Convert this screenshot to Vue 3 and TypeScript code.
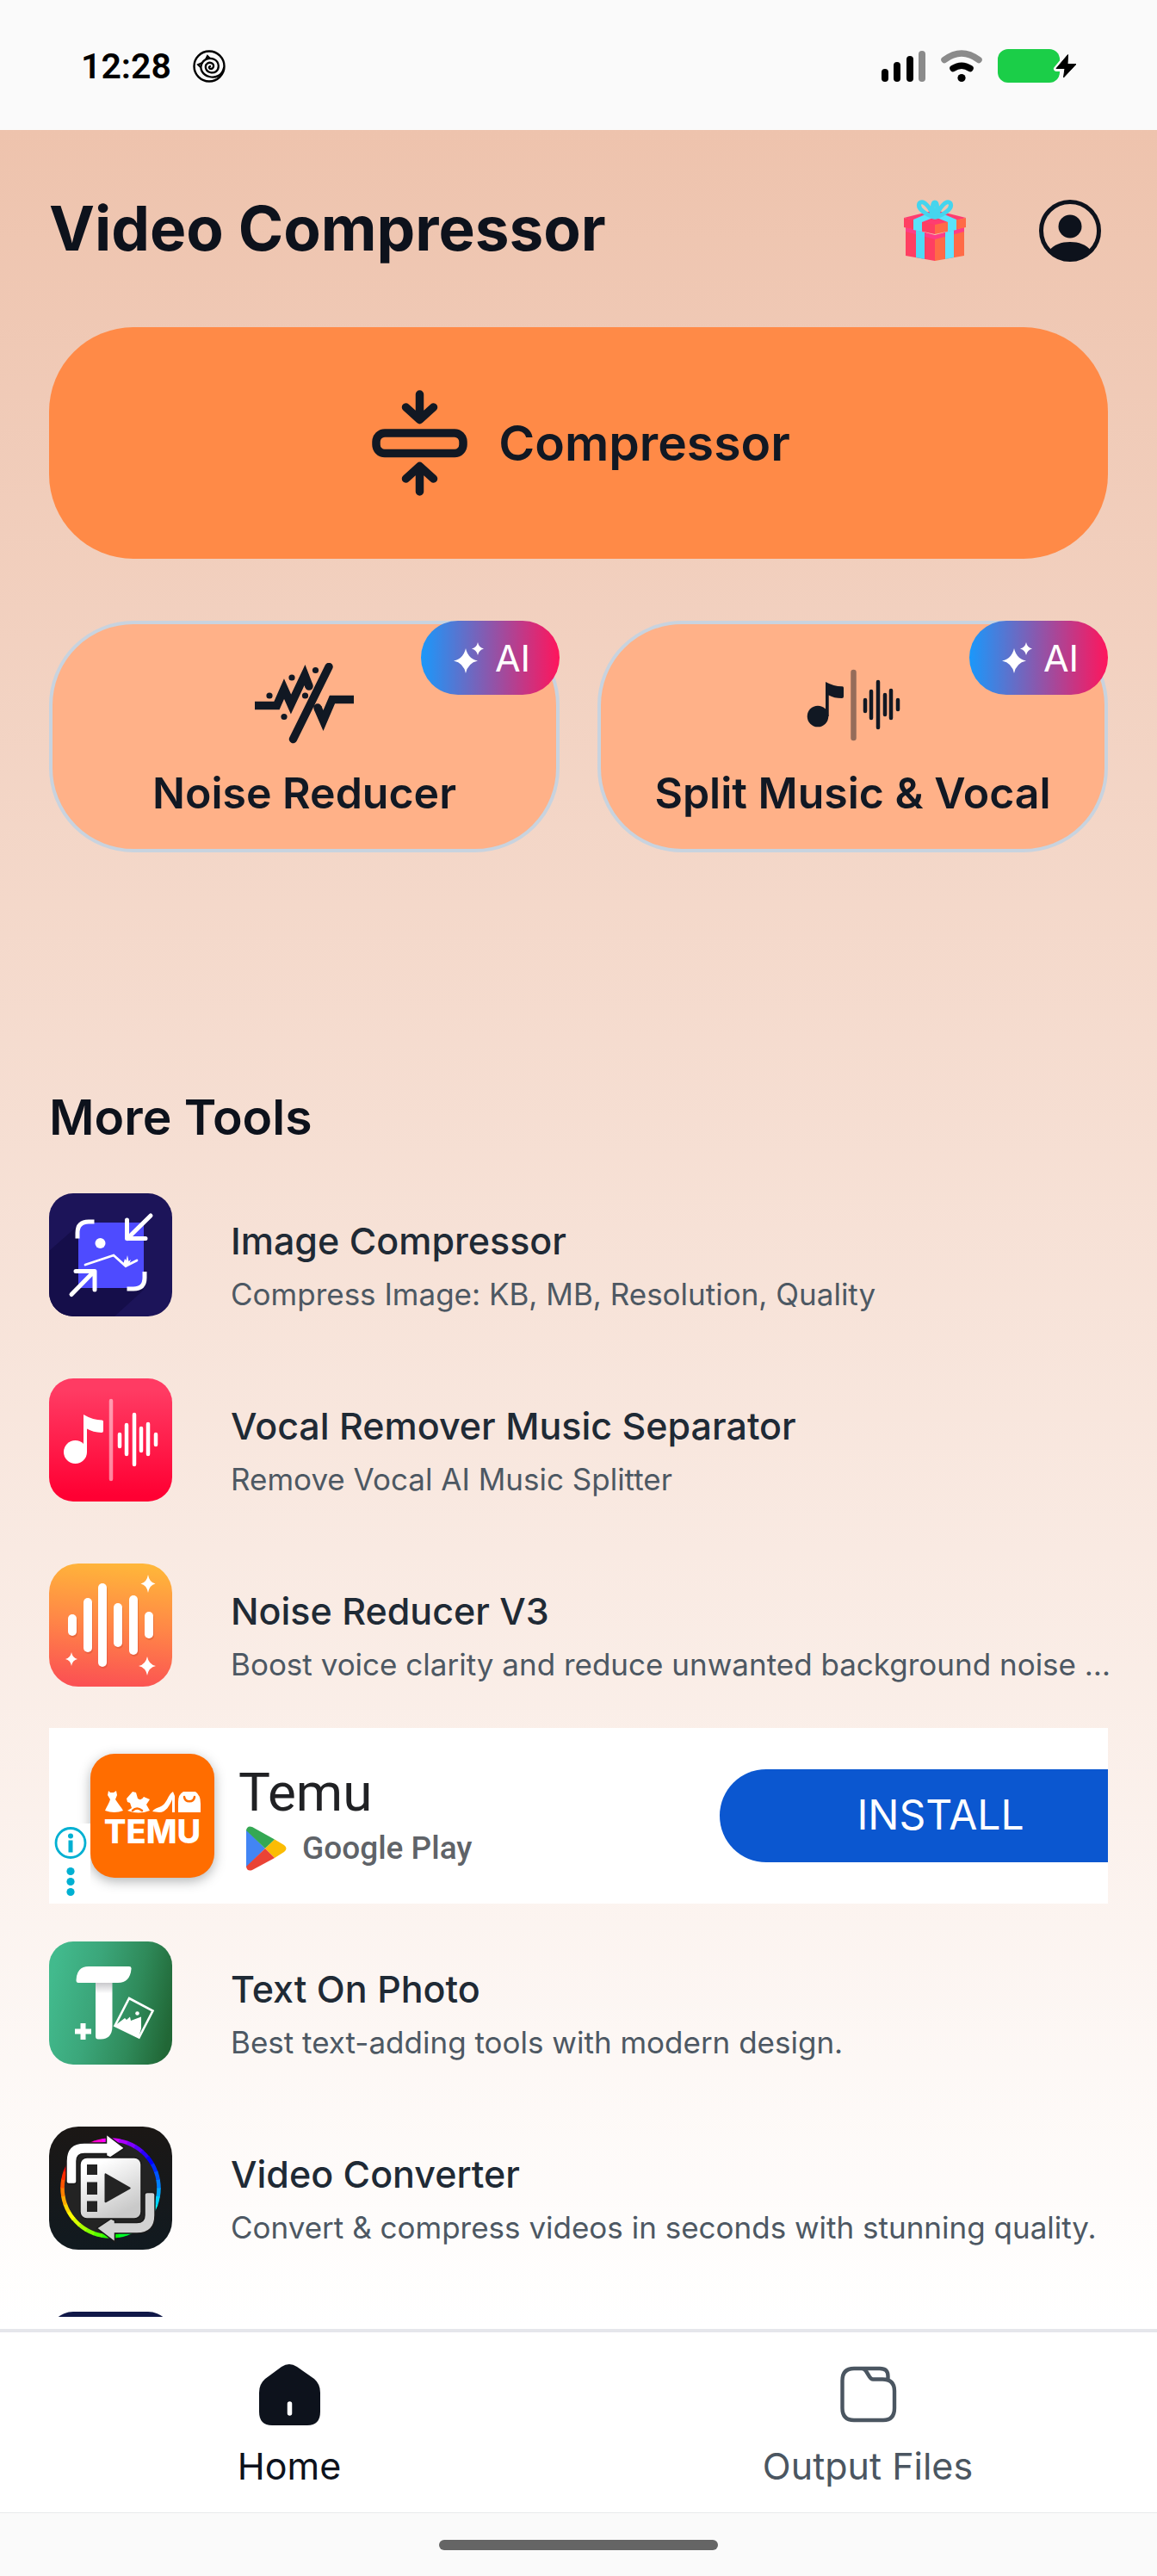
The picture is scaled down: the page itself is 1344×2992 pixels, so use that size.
<script setup lang="ts">
type IconName = 'image' | 'vocal' | 'noise' | 'text' | 'video' | 'next'

interface Tool {
  icon: IconName
  title: string
  text: string
}

const toolsBeforeAd: Tool[] = [
  { icon: 'image', title: 'Image Compressor', text: 'Compress Image: KB, MB, Resolution, Quality' },
  { icon: 'vocal', title: 'Vocal Remover Music Separator', text: 'Remove Vocal AI Music Splitter' },
  { icon: 'noise', title: 'Noise Reducer V3', text: 'Boost voice clarity and reduce unwanted background noise …' },
]

const toolsAfterAd: Tool[] = [
  { icon: 'text', title: 'Text On Photo', text: 'Best text-adding tools with modern design.' },
  { icon: 'video', title: 'Video Converter', text: 'Convert & compress videos in seconds with stunning quality.' },
  { icon: 'next', title: '', text: '' },
]

const sections = [
  { id: 'before', tools: toolsBeforeAd },
  { id: 'after', tools: toolsAfterAd },
]

// x, top, bottom of every sound bar
const darkBars = [[72, 43, 56], [79, 33, 64], [87, 22, 75], [95, 37, 60], [102, 32, 64], [110, 43, 54]]
const vocalBars = [[82, 65, 79], [90, 54, 88], [99, 42, 100], [107, 58, 84], [115, 53, 88], [124, 65, 77]]
const noiseBars = [[27, 64, 79], [45, 45, 98], [62, 28, 115], [80, 51, 92], [98, 42, 101], [116, 61, 82]]

// Colour wheel split into short arcs
const ring = Array.from({ length: 36 }, (_, i) => {
  const point = (deg: number) => {
    const a = ((deg - 90) * Math.PI) / 180
    return `${(71.5 + 56 * Math.cos(a)).toFixed(1)} ${(71.5 + 56 * Math.sin(a)).toFixed(1)}`
  }
  return {
    d: `M${point(i * 10)}A56 56 0 0 1 ${point(i * 10 + 11)}`,
    color: `hsl(${(650 - i * 10) % 360} 100% 50%)`,
  }
})
</script>

<template>
  <div class="screen">
    <div class="status">
      <div class="status-left">
        <span class="time">12:28</span>
        <svg width="38" height="38" viewBox="0 0 38 38" fill="none" stroke="#000" stroke-linecap="round" aria-hidden="true">
          <circle cx="19" cy="19" r="17.5" stroke-width="2.4" />
          <path d="M36 21C34 30 26 33 19 31C11 29 8 22 10 17C12 11 19 8 25 11C31 14 31 22 27 25C23 28 16 26 15 21C14 16 19 13 23 16C25 18 24 22 21 22C19 22 18 20 20 19" stroke-width="2.3" />
          <path d="M11 15L6 17L9 20M15 11L17 7L20 10" stroke-width="2" />
        </svg>
      </div>
      <svg width="226" height="39" viewBox="0 0 226 39" aria-hidden="true">
        <rect x="0" y="23" width="8" height="15" rx="4" />
        <rect x="14" y="15" width="8" height="23" rx="4" />
        <rect x="29" y="8" width="8" height="30" rx="4" />
        <rect x="43" y="2" width="8" height="36" rx="4" fill="#8b8b8b" />
        <path d="M73 12.500Q93 -2.500 113 12.500" fill="none" stroke="#8b8b8b" stroke-width="7.500" stroke-linecap="round" />
        <path d="M83 22.500Q93 16 103 22.500" fill="none" stroke="#000" stroke-width="7.500" stroke-linecap="round" />
        <circle cx="93" cy="33.500" r="4.600" />
        <rect x="135" y="0" width="72" height="39" rx="12" fill="#1bce48" />
        <path d="M217 6L203 23H212L209 34L226 17H216Z" fill="#fafafa" stroke="#fafafa" stroke-width="6" stroke-linejoin="round" />
        <path d="M216.500 6.500L203 22.500H213L211.500 33L226 17.500H216Z" stroke="#000" stroke-linejoin="round" />
      </svg>
    </div>

    <main class="content">
      <header class="header">
        <h1>Video Compressor</h1>
        <div class="header-actions">
          <button type="button" aria-label="Gifts">
            <svg width="72" height="72" viewBox="0 0 72 72" aria-hidden="true">
              <path d="M2 32L36 42V71L2 65Z" fill="#ff3f62" />
              <path d="M70 32L36 42V71L70 65Z" fill="#ff6b47" />
              <path d="M2 32L36 41L70 32V37L36 46L2 37Z" fill="#ff3d86" />
              <path d="M14 35L24 38V69L14 67Z" fill="#4fdaf5" />
              <path d="M58 35L48 38V69L58 67Z" fill="#5fe3ff" />
              <path d="M0 21L36 12L72 21L36 31Z" fill="#ff3d70" />
              <path d="M0 21L36 29V40L0 32Z" fill="#ff3f62" />
              <path d="M72 21L36 29V40L72 32Z" fill="#ff6b47" />
              <path d="M11 23L25 17L36 16L47 17L61 23V35L51 37V26L36 20L21 26V37L11 35Z" fill="#5ae3fb" />
              <g fill="none" stroke="#45d5ee" stroke-width="5" stroke-linejoin="round">
                <path d="M35 20C25 17 15 10 18 4C23-1 31 10 35 20Z" />
                <path d="M37 20C47 17 57 10 54 4C49-1 41 10 37 20Z" />
                <path d="M36 20C32 13 33 3 36 3C39 3 40 13 36 20Z" />
              </g>
            </svg>
          </button>
          <button type="button" aria-label="Profile">
            <svg width="72" height="72" viewBox="0 0 72 72" fill="#0d121c" aria-hidden="true">
              <circle cx="36" cy="36" r="33.500" fill="none" stroke="#0d121c" stroke-width="5" />
              <circle cx="36" cy="31" r="13.500" />
              <path d="M12 59C17 52 26 49 36 49S55 52 60 59C54 66 46 70.500 36 70.500S18 66 12 59Z" />
            </svg>
          </button>
        </div>
      </header>

      <button type="button" class="primary">
        <svg width="111" height="123" viewBox="0 0 111 123" fill="none" stroke="#111823" stroke-width="9.500" stroke-linecap="round" stroke-linejoin="round" aria-hidden="true">
          <path d="M55.500 5V33M39.500 20L55.500 34.500L71.500 20M55.500 118V90M39.500 103L55.500 88.500L71.500 103" />
          <rect x="5" y="50" width="101" height="23.500" rx="10" />
        </svg>
        <span>Compressor</span>
      </button>

      <div class="cards">
        <button type="button" class="card">
          <svg width="115" height="94" viewBox="0 0 115 94" fill="none" stroke="#111823" stroke-width="9.500" stroke-miterlimit="10" aria-hidden="true">
            <path d="M0 49.500H25.500L34 30L42 48L58 14L63 27M73 52L79.500 67L90 42.500H115" />
            <path d="M86 4.500L44.500 88.500M63 27V27.100M73 52V52.100" stroke-linecap="round" />
            <g fill="#111823" stroke="none">
              <circle cx="17" cy="38" r="3.600" /><circle cx="43" cy="17" r="3.600" /><circle cx="70.500" cy="8.500" r="3.600" />
              <circle cx="58.500" cy="38" r="3.600" /><circle cx="34" cy="62.500" r="3.600" />
            </g>
          </svg>
          <span class="card-label">Noise Reducer</span>
          <span class="badge">
            <svg width="35" height="36" viewBox="0 0 35 36" fill="#fff" aria-hidden="true">
              <path d="M14 7Q16.500 19 28 21.500Q16.500 24 14 36Q11.500 24 0 21.500Q11.500 19 14 7ZM28 0Q29.200 6 35 7.500Q29.200 9 28 15Q26.800 9 21 7.500Q26.800 6 28 0Z" />
            </svg>AI
          </span>
        </button>
        <button type="button" class="card">
          <svg width="115" height="94" viewBox="0 0 115 94" aria-hidden="true">
            <g fill="#111823">
              <ellipse cx="17" cy="62" rx="12.300" ry="12.300" />
              <path d="M26 62V22Q36 27.500 45.500 27.300Q47 27.300 47 29V39Q47 41 45 41Q36 41 29.700 37.500V62Z" />
            </g>
            <path d="M58.500 11V87" stroke="#111823" stroke-opacity="0.45" stroke-width="6.500" stroke-linecap="round" />
            <path v-for="b in darkBars" :key="b[0]" :d="`M${b[0]} ${b[1]}V${b[2]}`" stroke="#111823" stroke-width="4.500" stroke-linecap="round" />
          </svg>
          <span class="card-label">Split Music &amp; Vocal</span>
          <span class="badge">
            <svg width="35" height="36" viewBox="0 0 35 36" fill="#fff" aria-hidden="true">
              <path d="M14 7Q16.500 19 28 21.500Q16.500 24 14 36Q11.500 24 0 21.500Q11.500 19 14 7ZM28 0Q29.200 6 35 7.500Q29.200 9 28 15Q26.800 9 21 7.500Q26.800 6 28 0Z" />
            </svg>AI
          </span>
        </button>
      </div>

      <h2>More Tools</h2>

      <template v-for="section in sections" :key="section.id">
        <ul class="tools">
          <li v-for="tool in section.tools" :key="tool.icon">
            <a href="#" class="tool">
              <svg class="tool-icon" :class="tool.icon" width="143" height="143" viewBox="0 0 143 143" aria-hidden="true">
                <template v-if="tool.icon === 'image'">
                  <rect width="143" height="143" fill="#1c1459" />
                  <path d="M0 67L33 38L110 112L76 143H0Z" fill="#150e4a" />
                  <rect x="34" y="34" width="76" height="76" rx="3" fill="#4e4bff" />
                  <g fill="none" stroke="#fff" stroke-width="5">
                    <path d="M52.500 33H46Q33 33 33 46V52.500M90.500 111H98Q111 111 111 98V91" />
                    <path d="M118 26L91 52.500M90.500 31V52.500H112M26 117.500L52 91M31 90.500H53V112" stroke-linecap="round" stroke-linejoin="round" />
                    <path d="M42 83L75 72L89 84.500L102 78" stroke-width="2.800" stroke-linecap="round" />
                  </g>
                  <path d="M86 83L88 76L89.500 78L91 72L92.500 79L95 77L93 83L89 86Z" fill="#fff" />
                  <circle cx="59.500" cy="58" r="6" fill="#fff" />
                </template>
                <template v-else-if="tool.icon === 'vocal'">
                  <defs>
                    <linearGradient id="vocal-bg" x1="0" y1="0" x2="0" y2="1">
                      <stop offset="0.1" stop-color="#ff3b63" /><stop offset="0.95" stop-color="#ff0033" />
                    </linearGradient>
                  </defs>
                  <rect width="143" height="143" fill="url(#vocal-bg)" />
                  <circle cx="30.500" cy="85.500" r="13.500" fill="#fff" />
                  <path d="M40 86V42Q51 48.500 61.500 48.500Q63 48.500 63 50V61Q63 63 61 63Q51 62.500 44 58.500V86Z" fill="#fff" />
                  <path d="M72 26V117" stroke="#fff" stroke-opacity="0.5" stroke-width="4.500" stroke-linecap="round" />
                  <path v-for="b in vocalBars" :key="b[0]" :d="`M${b[0]} ${b[1]}V${b[2]}`" stroke="#fff" stroke-width="4.500" stroke-linecap="round" />
                </template>
                <template v-else-if="tool.icon === 'noise'">
                  <defs>
                    <linearGradient id="noise-bg" x1="0.55" y1="0" x2="0.45" y2="1">
                      <stop offset="0" stop-color="#ffb63a" /><stop offset="0.5" stop-color="#ff8647" /><stop offset="1" stop-color="#fb5153" />
                    </linearGradient>
                  </defs>
                  <rect width="143" height="143" fill="url(#noise-bg)" />
                  <g transform="translate(1 2)" stroke="#b33c20" stroke-opacity="0.25" stroke-width="10" stroke-linecap="round">
                    <path v-for="b in noiseBars" :key="b[0]" :d="`M${b[0]} ${b[1]}V${b[2]}`" />
                  </g>
                  <path v-for="b in noiseBars" :key="b[0]" :d="`M${b[0]} ${b[1]}V${b[2]}`" stroke="#fff" stroke-width="10" stroke-linecap="round" />
                  <path d="M115 13Q116.500 22 123.500 23.500Q116.500 25 115 34Q113.500 25 106.500 23.500Q113.500 22 115 13ZM26 103Q27.200 109.800 33 111Q27.200 112.200 26 119Q24.800 112.200 19 111Q24.800 109.800 26 103ZM114 108Q115.700 117.300 124 119Q115.700 120.700 114 130Q112.300 120.700 104 119Q112.300 117.300 114 108Z" fill="#fff" />
                </template>
                <template v-else-if="tool.icon === 'text'">
                  <defs>
                    <linearGradient id="text-bg" x1="0" y1="0.4" x2="1" y2="0.6">
                      <stop offset="0" stop-color="#42ba8d" /><stop offset="0.35" stop-color="#3ba67a" /><stop offset="0.7" stop-color="#2f8a5a" /><stop offset="1" stop-color="#216736" />
                    </linearGradient>
                    <linearGradient id="text-stem" x1="0" y1="0" x2="0" y2="1">
                      <stop offset="0" stop-color="#c4c4c8" /><stop offset="0.2" stop-color="#fff" />
                    </linearGradient>
                  </defs>
                  <rect width="143" height="143" fill="url(#text-bg)" />
                  <path d="M54 47H73.500V98Q73.500 113.500 60 113.500H57Q54 113.500 54 110Z" fill="url(#text-stem)" />
                  <path d="M31.500 45Q32 29 46 29H93Q96 29 95.500 32Q94 48 80 48H34Q31.500 48 31.500 45Z" fill="#fff" />
                  <path d="M39.500 95V114M30 104.500H49" stroke="#fff" stroke-width="6" />
                  <path d="M93 66L120.500 80.500L104.500 111.500L76.500 98Z" fill="none" stroke="#fff" stroke-width="2.600" />
                  <path d="M76 98L88 89L90 91L94 87.500L95 92L107 87.500L107 101L104 112Z" fill="#fff" />
                  <circle cx="102.500" cy="83.500" r="2.300" fill="#fff" />
                </template>
                <template v-else-if="tool.icon === 'video'">
                  <defs>
                    <linearGradient id="video-bg" x1="0" y1="0" x2="0" y2="1">
                      <stop offset="0" stop-color="#1b1715" /><stop offset="1" stop-color="#111a20" />
                    </linearGradient>
                    <linearGradient id="video-film" x1="0" y1="0" x2="0.5" y2="1">
                      <stop offset="0.2" stop-color="#fff" /><stop offset="1" stop-color="#c9c9c9" />
                    </linearGradient>
                  </defs>
                  <rect width="143" height="143" fill="url(#video-bg)" />
                  <circle cx="71.500" cy="71.500" r="55" fill="#232323" />
                  <path v-for="arc in ring" :key="arc.d" :d="arc.d" fill="none" :stroke="arc.color" stroke-width="4.500" />
                  <g stroke="#1a1a1a" stroke-width="1.500">
                    <path d="M20 64V40Q20 19 41 19H66.500V9L87.500 25L71 36L66.500 34V31.500H41Q32 31.500 32 40V64Q32 66.500 29 66.500H23Q20 66.500 20 64Z" fill="#fff" />
                    <path d="M20 64V40Q20 19 41 19H66.500V9L87.500 25L71 36L66.500 34V31.500H41Q32 31.500 32 40V64Q32 66.500 29 66.500H23Q20 66.500 20 64Z" fill="#d2d2d2" transform="rotate(180 71.500 71.500)" />
                    <rect x="36" y="36" width="71" height="71" rx="8" fill="url(#video-film)" />
                  </g>
                  <path d="M44 44H56V56H44ZM44 64.500H56V79H44ZM44 86.500H56V99H44ZM66 54.500Q64.500 53.500 64.500 56V87Q64.500 89 66.500 88L94 72.500Q95.500 71.500 94 70.500Z" fill="#232323" />
                </template>
                <rect v-else width="143" height="143" fill="#101848" />
              </svg>
              <span class="tool-text">
                <span class="tool-title">{{ tool.title }}</span>
                <span class="tool-desc">{{ tool.text }}</span>
              </span>
            </a>
          </li>
        </ul>

        <aside v-if="section.id === 'before'" class="ad">
          <svg class="ad-info" width="48" height="93" viewBox="0 0 48 93" fill="#00b0d2" aria-hidden="true">
            <circle cx="25" cy="22.500" r="17" fill="none" stroke="#00b0d2" stroke-width="2.800" />
            <circle cx="25" cy="14.500" r="3" />
            <rect x="22.500" y="19.500" width="5" height="14" />
            <circle cx="25" cy="55.500" r="4.600" /><circle cx="25" cy="67.500" r="4.600" /><circle cx="25" cy="79.500" r="4.600" />
          </svg>
          <div class="ad-logo">
            <svg width="112" height="26" viewBox="0 0 112 26" fill="#fff" aria-hidden="true">
              <path d="M5 0L7 2H11L14 0L15 5L13 10C16 15 20 19 22 23Q12 27 1 23C3 18 6 14 7 10L4 5Z" />
              <path d="M26 9L33 1L37 2L39 9Q43 12 46 7L53 10L49 16L53 23Q40 28 27 23L32 20L30 14L27 13Z" />
              <path d="M56 24C59 19 66 20 70 15C74 10 75 4 80 1L82 6V25H79V10C76 17 72 25 64 25Z" />
              <path d="M92 1H106Q112 5 112 15V25H86V13Q86 4 92 1Z" />
              <path d="M93 7C94 14 104 14 105 7M33 23Q38 18 44 23" fill="none" stroke="#ff6d00" stroke-width="2.500" stroke-linecap="round" />
            </svg>
            <span>TEMU</span>
          </div>
          <div class="ad-body">
            <span class="ad-title">Temu</span>
            <span class="ad-store">
              <svg width="48" height="52" viewBox="0 0 48 52" aria-hidden="true">
                <path d="M1 4L23 26L1 48Z" fill="#4285f4" />
                <path d="M1 5Q2-1 8 1L34 15.500L23 26Z" fill="#34a853" />
                <path d="M34 15.500L45 22Q50 26 45 30L34 37L23 26Z" fill="#fbbc04" />
                <path d="M1 47Q2 53 8 51L34 37L23 26Z" fill="#ea4335" />
              </svg>
              Google Play
            </span>
          </div>
          <button type="button" class="install">INSTALL</button>
        </aside>
      </template>
    </main>

    <nav class="tabs">
      <a href="#" class="tab active" aria-current="page">
        <svg width="71" height="71" viewBox="0 0 71 71" aria-hidden="true">
          <path d="M26 3Q35-3 44 3L64 17Q71 23 71 33V55Q71 71 56 71H15Q0 71 0 55V33Q0 23 7 17Z" fill="#0d121c" />
          <path d="M35.500 46V57" stroke="#fff" stroke-width="5.500" stroke-linecap="round" />
        </svg>
        Home
      </a>
      <a href="#" class="tab">
        <svg width="71" height="71" viewBox="0 0 71 71" fill="none" stroke="#4b5661" stroke-width="4.400" stroke-linejoin="round" aria-hidden="true">
          <path d="M58.500 18V14Q58.500 5 49 5H19Q5.500 5 5.500 19V51Q5.500 65 19 65H53Q66 65 66 51V31Q66 17.500 52 17.500H41Q39 17.500 37 14.500L33 8Q31 5 28 5" />
        </svg>
        Output Files
      </a>
    </nav>
    <div class="gesture"><span></span></div>
  </div>
</template>

<style>
body {
  background: #fafafa;
}
</style>

<style scoped>
* {
  box-sizing: border-box;
}

.screen {
  display: flex;
  flex-direction: column;
  height: 100vh;
  font-family: Inter, Roboto, sans-serif;
  color: #0d121c;
  background: linear-gradient(to bottom, #eec3ad 151px, #ffffff 2700px);
}

svg {
  display: block;
  flex: none;
}

button {
  margin: 0;
  border: 0;
  padding: 0;
  font: inherit;
  color: inherit;
  background: none;
  cursor: pointer;
}

a {
  color: inherit;
  text-decoration: none;
}

.status {
  display: flex;
  flex: none;
  align-items: center;
  justify-content: space-between;
  height: 151px;
  padding: 2px 94px 0;
  background: #fafafa;
}

.status-left {
  display: flex;
  align-items: center;
  gap: 25px;
}

.time {
  font-family: Roboto, sans-serif;
  font-size: 41px;
  font-weight: 600;
  line-height: 48px;
  color: #000;
}

.content {
  flex: 1;
  min-height: 0;
  margin-bottom: 14px;
  padding: 0 57px;
  overflow: hidden;
}

.header {
  display: flex;
  align-items: flex-start;
  justify-content: space-between;
  padding: 81px 8px 76px 0;
}

h1 {
  margin: 0;
  font-size: 71px;
  font-weight: 700;
  line-height: 66px;
}

.header-actions {
  display: flex;
  gap: 85px;
}

.primary {
  display: flex;
  align-items: center;
  justify-content: center;
  gap: 36px;
  width: 100%;
  height: 269px;
  padding-left: 6px;
  border-radius: 98px;
  background: #ff8a47;
  color: #111823;
  font-size: 57px;
  font-weight: 600;
}

.cards {
  display: grid;
  grid-template-columns: 1fr 1fr;
  gap: 44px;
  margin-top: 72px;
}

.card {
  position: relative;
  display: flex;
  flex-direction: column;
  align-items: center;
  gap: 27px;
  padding: 45px 0 35px;
  border: 4px solid #c8d3df;
  border-radius: 98px;
  background: #ffb188;
  color: #111823;
}

.card-label {
  font-size: 50px;
  font-weight: 600;
  line-height: 60px;
}

.badge {
  position: absolute;
  top: -4px;
  right: -4px;
  display: flex;
  align-items: center;
  justify-content: center;
  gap: 13px;
  width: 161px;
  height: 86px;
  padding-left: 4px;
  border-radius: 43px;
  background: linear-gradient(to right, #1a98fb, #ff155c);
  color: #fff;
  font-size: 43px;
}

h2 {
  margin: 272px 0 52px;
  font-size: 57px;
  font-weight: 600;
  line-height: 72px;
}

.tools {
  display: flex;
  flex-direction: column;
  gap: 72px;
  margin: 0;
  padding: 0;
  list-style: none;
}

.tool {
  display: flex;
  align-items: flex-end;
  gap: 68px;
}

.tool-icon {
  border-radius: 28px;
}

.tool-icon.noise,
.tool-icon.video {
  border-radius: 34px;
}

.tool-text {
  display: flex;
  flex-direction: column;
  gap: 6px;
  min-width: 0;
  white-space: nowrap;
}

.tool-title {
  font-size: 43px;
  font-weight: 500;
  line-height: 60px;
  color: #1f2a35;
}

.tool-desc {
  font-size: 35px;
  line-height: 52px;
  color: #4d5863;
}

.ad {
  position: relative;
  display: flex;
  align-items: center;
  height: 204px;
  margin: 48px 0 44px;
  padding-left: 48px;
  overflow: hidden;
  background: #fff;
}

.ad-info {
  position: absolute;
  left: 0;
  bottom: 0;
  background: #fff;
}

.ad-logo {
  display: flex;
  flex: none;
  flex-direction: column;
  align-items: center;
  gap: 1px;
  width: 144px;
  height: 144px;
  padding-top: 43px;
  border-radius: 28px;
  background: #ff6d00;
  box-shadow: 0 4px 14px rgba(60, 64, 67, 0.4);
  color: #fff;
  font-size: 38px;
  font-weight: 800;
  line-height: 40px;
}

.ad-body {
  display: flex;
  flex-direction: column;
  gap: 3px;
  margin-left: 28px;
  font-family: Roboto, sans-serif;
}

.ad-title {
  font-size: 62px;
  line-height: 72px;
  color: #202124;
}

.ad-store {
  display: flex;
  align-items: center;
  gap: 18px;
  padding-left: 8px;
  font-size: 37px;
  font-weight: 500;
  color: #5f6368;
}

.install {
  width: 451px;
  height: 108px;
  margin-left: auto;
  padding: 0 0 4px 62px;
  border-radius: 54px 0 0 54px;
  background: #0b57d0;
  color: #fff;
  font-size: 48px;
}

.tabs {
  display: grid;
  flex: none;
  grid-template-columns: 1fr 1fr;
  border-top: 4px solid #e5e6eb;
  border-bottom: 1px solid #e8eaeb;
  background: #fff;
}

.tab {
  display: flex;
  flex-direction: column;
  align-items: center;
  gap: 19px;
  padding: 37px 0 26px;
  font-size: 43px;
  line-height: 56px;
  color: #4b5661;
}

.tab.active {
  color: #0d121c;
}

.gesture {
  display: flex;
  flex: none;
  justify-content: center;
  height: 73px;
  padding-top: 31px;
  background: #fafafa;
}

.gesture span {
  width: 324px;
  height: 12px;
  border-radius: 6px;
  background: #656565;
}
</style>
